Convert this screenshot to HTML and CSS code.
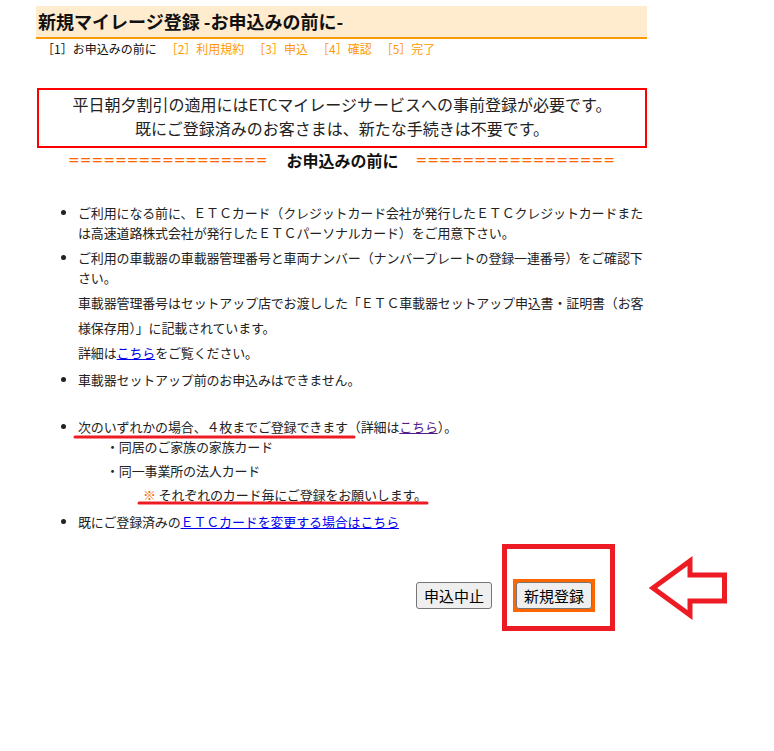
FILE: index.html
```html
<!DOCTYPE html>
<html lang="ja">
<head>
<meta charset="utf-8">
<title>新規マイレージ登録</title>
<link rel="stylesheet" href="styles.css">
</head>
<body>
<div class="page">
  <h1 class="title">新規マイレージ登録 -お申込みの前に-</h1>
  <div class="steps">
    <span class="step current">［1］お申込みの前に</span>
    <span class="step">［2］利用規約</span>
    <span class="step">［3］申込</span>
    <span class="step">［4］確認</span>
    <span class="step">［5］完了</span>
  </div>
  <div class="notice">
    <p>平日朝夕割引の適用にはETCマイレージサービスへの事前登録が必要です。</p>
    <p>既にご登録済みのお客さまは、新たな手続きは不要です。</p>
  </div>
  <div class="section-head">
    <span class="eq">=================</span>
    <span class="section-title">お申込みの前に</span>
    <span class="eq">=================</span>
  </div>
  <ul class="notes">
    <li>ご利用になる前に、ＥＴＣカード（クレジットカード会社が発行したＥＴＣクレジットカードまたは高速道路株式会社が発行したＥＴＣパーソナルカード）をご用意下さい。</li>
    <li>
      <div>ご利用の車載器の車載器管理番号と車両ナンバー（ナンバープレートの登録一連番号）をご確認下さい。</div>
      <div class="sub first">車載器管理番号はセットアップ店でお渡しした「ＥＴＣ車載器セットアップ申込書・証明書（お客様保存用）」に記載されています。</div>
      <div class="sub">詳細は<a class="link" href="#">こちら</a>をご覧ください。</div>
    </li>
    <li class="spaced">車載器セットアップ前のお申込みはできません。</li>
    <li>
      <div>次のいずれかの場合、４枚までご登録できます（詳細は<a class="link visited" href="#">こちら</a>）。</div>
      <div class="case first">・同居のご家族の家族カード</div>
      <div class="case">・同一事業所の法人カード</div>
      <div class="case note"><span class="mark">※</span> それぞれのカード毎にご登録をお願いします。</div>
    </li>
    <li>既にご登録済みの<a class="link" href="#">ＥＴＣカードを変更する場合はこちら</a></li>
  </ul>
  <div class="actions">
    <button class="btn" type="button">申込中止</button>
    <span class="focus-frame"><button class="btn" type="button">新規登録</button></span>
  </div>

  <svg class="annotations" width="774" height="751" viewBox="0 0 774 751" aria-hidden="true">
    <line x1="75" y1="437" x2="354" y2="437" class="pen"/>
    <line x1="139" y1="503" x2="427" y2="503" class="pen"/>
    <rect x="504.5" y="546.5" width="108" height="82" class="box"/>
    <polygon points="653,588 690,561 690,575 724.5,575 724.5,601 690,601 690,615" class="box"/>
  </svg>
</div>
</body>
</html>
```
FILE: styles.css
```css
html, body {
  margin: 0;
  padding: 0;
  background: #ffffff;
}

body {
  font-family: "Noto Sans CJK JP", "Noto Sans", sans-serif;
  color: #222222;
}

.page {
  position: relative;
  width: 611px;
  height: 745px;
  padding: 6px 0 0 36px;
}

.title {
  margin: 0;
  height: 31px;
  line-height: 31px;
  padding-left: 2px;
  font-size: 18px;
  font-weight: bold;
  color: #111111;
  background: #ffebcd;
  border-bottom: 2px solid #ff9900;
}

.steps {
  display: flex;
  gap: 9px;
  height: 19px;
  line-height: 19px;
  padding-left: 6px;
  font-size: 12px;
  color: #ff9900;
}

.step.current {
  color: #111111;
}

.notice {
  margin: 30px 0 0 1px;
  border: 2px solid #ff0000;
  padding: 2px 0 6px;
  font-size: 16px;
  line-height: 24px;
  text-align: center;
  color: #222222;
}

.notice p {
  margin: 0;
}

.section-head {
  margin-top: 1px;
  height: 22px;
  line-height: 22px;
  display: flex;
  justify-content: center;
  align-items: center;
}

.eq {
  font-family: "DejaVu Sans", sans-serif;
  font-size: 14px;
  color: #ff6600;
}

.section-title {
  margin: 0 17px 0 19px;
  font-size: 16px;
  font-weight: bold;
  color: #111111;
}

.notes {
  margin: 32px 0 0;
  padding: 0 0 0 42px;
  font-size: 13px;
  letter-spacing: -0.15px;
  line-height: 20px;
  color: #222222;
}

.notes li {
  margin-bottom: 5px;
}

.notes li.spaced {
  margin-bottom: 27px;
}

.sub {
  line-height: 25px;
}

.sub.first {
  margin-top: 2px;
}

.case {
  line-height: 24px;
  padding-left: 28px;
}

.case.first {
  margin-top: -2px;
}

.case.note {
  padding-left: 65px;
}

.mark {
  color: #ff6600;
}

.link {
  color: #0000ee;
  text-decoration: underline;
}

.link.visited {
  color: #551a8b;
}

.actions {
  margin-top: 47px;
  display: flex;
  align-items: center;
  justify-content: flex-end;
  gap: 21px;
  padding-right: 52px;
}

.btn {
  font-family: "Noto Sans CJK JP", sans-serif;
  font-size: 15px;
  height: 27px;
  padding: 0 7px;
  line-height: 25px;
  border: 1px solid #767676;
  border-radius: 3px;
  background: #efefef;
  color: #000000;
}

.focus-frame {
  display: inline-flex;
  padding: 3px;
  background: #ff6600;
}

.annotations {
  position: absolute;
  top: 0;
  left: 0;
  pointer-events: none;
}

.pen {
  stroke: #ed1c24;
  stroke-width: 3;
  stroke-linecap: round;
}

.box {
  fill: none;
  stroke: #ed1c24;
  stroke-width: 5;
  stroke-linejoin: miter;
}
```
